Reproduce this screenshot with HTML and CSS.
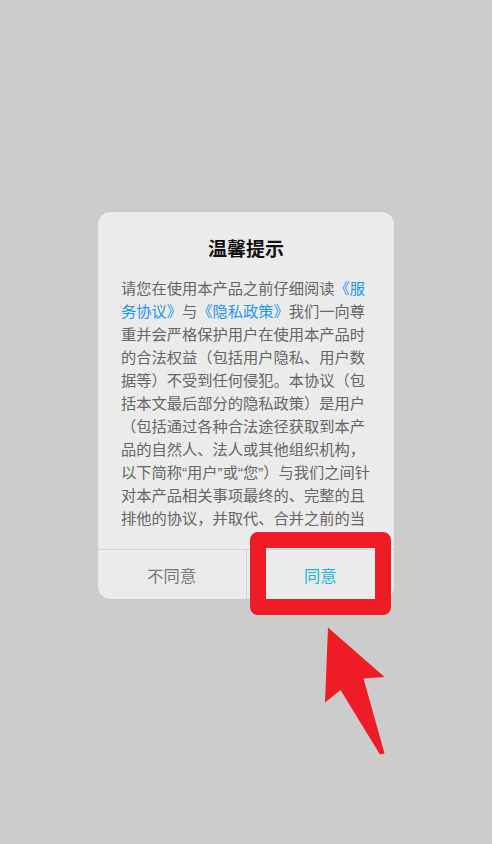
FILE: index.html
```html
<!DOCTYPE html>
<html lang="zh-CN">
<head>
<meta charset="utf-8">
<title>温馨提示</title>
<link rel="stylesheet" href="styles.css">
</head>
<body>
<div class="screen">
  <div class="dialog">
    <h1 class="title">温馨提示</h1>
    <div class="content">
      <p class="text">请您在使用本产品之前仔细阅读<span class="link">《服</span><span class="link">务协议》</span>与<span class="link">《隐私政策》</span>我们一向尊重并会严格保护用户在使用本产品时的合法权益（包括用户隐私、用户数据等）不受到任何侵犯。本协议（包括本文最后部分的隐私政策）是用户（包括通过各种合法途径获取到本产品的自然人、法人或其他组织机构，以下简称“用户”或“您”）与我们之间针对本产品相关事项最终的、完整的且排他的协议，并取代、合并之前的当</p>
    </div>
    <div class="actions">
      <div class="btn btn-deny">不同意</div>
      <div class="btn btn-agree">同意</div>
    </div>
  </div>
</div>
<div class="highlight"></div>
<svg class="arrow" width="492" height="844" viewBox="0 0 492 844">
  <polygon points="328,627.5 384.5,677 363.5,678.5 384.5,753.5 380,754.5 340.5,690 325,702.5" fill="#ee1c25"/>
</svg>
</body>
</html>
```

FILE: styles.css
```css
html, body {
  margin: 0;
  padding: 0;
}
body {
  background: #cccccc;
  width: 492px;
  height: 844px;
  overflow: hidden;
  font-family: "Liberation Sans", "Noto Sans CJK SC", sans-serif;
  position: relative;
}
.screen {
  padding-top: 212px;
  padding-left: 98px;
}
.dialog {
  width: 296px;
  background: #ebebeb;
  border-radius: 12px;
  box-shadow: 0 0 1px rgba(0, 0, 0, 0.12);
  overflow: hidden;
}
.title {
  margin: 0;
  padding-top: 25px;
  height: 26px;
  line-height: 26px;
  font-size: 19px;
  font-weight: bold;
  color: #111111;
  text-align: center;
}
.content {
  margin-top: 13.5px;
  padding: 0 21px 19.5px 23px;
}
.text {
  margin: 0;
  height: 253px;
  overflow: hidden;
  font-size: 15.25px;
  line-height: 23px;
  color: #666666;
}
.link {
  color: #1e95ef;
}
.actions {
  display: flex;
  border-top: 1px solid #d3d3d3;
  height: 49px;
}
.btn {
  flex: 1;
  display: flex;
  align-items: center;
  justify-content: center;
  font-size: 16.3px;
}
.btn-deny {
  color: #777777;
  border-right: 1px solid #d3d3d3;
}
.btn-agree {
  color: #1ab4d6;
}
.highlight {
  position: absolute;
  left: 250px;
  top: 532px;
  width: 109px;
  height: 51px;
  border: 16px solid #ee1c25;
  border-radius: 8px;
}
.arrow {
  position: absolute;
  left: 0;
  top: 0;
}
```
